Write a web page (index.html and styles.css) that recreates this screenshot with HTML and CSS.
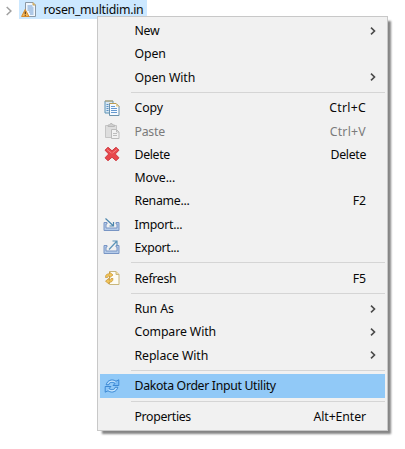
FILE: index.html
```
<!DOCTYPE html>
<html lang="en">
<head>
<meta charset="utf-8">
<title>Context menu</title>
<link rel="stylesheet" href="styles.css">
</head>
<body>
<div class="tree-row">
  <svg class="expander" viewBox="0 0 8 10"><path d="M1.7 1 5.9 5 1.7 9"/></svg>
  <div class="file">
    <svg class="file-icon" viewBox="0 0 16 17">
      <path d="M4.5 1.5h7.500l2.500 2.500v11.500h-10z" fill="#f1f7fd" stroke="#8a98a5"/>
      <path d="M12 1.500V4h2.500" fill="#e3c47c" stroke="#c6a35c"/>
      <path d="M6.500 5h5M6.500 7h6M6.500 9h6M8 11h4.500M9 13h3.500" stroke="#6d9ad0"/>
      <path d="M4.200 8.500 8 15.500H.6z" fill="#f5b95a" stroke="#d98b2b"/>
      <path d="M4.300 10.500v2.500M4.300 13.800v1" stroke="#5c3b16" stroke-width="1.200"/>
    </svg>
    <span class="tight">rosen_multidim.in</span>
  </div>
</div>

<div class="menu">
  <div class="item"><i></i><span class="tight">New</span><svg class="arrow" viewBox="0 0 6 8"><path d="M1 .7 4.500 4 1 7.300"/></svg></div>
  <div class="item"><i></i><span>Open</span></div>
  <div class="item"><i></i><span>Open With</span><svg class="arrow" viewBox="0 0 6 8"><path d="M1 .7 4.500 4 1 7.300"/></svg></div>
  <div class="sep"></div>
  <div class="item"><i><svg viewBox="0 0 16 16">
    <path d="M1 1h8v12H1z" fill="#d8e8f3" stroke="#5d93b5"/>
    <path d="M1 1h8" stroke="#c2a465"/>
    <path d="M2.500 4.500h2M2.500 6.500h2M2.500 8.500h2M2.500 10.500h2" stroke="#5c91c5"/>
    <path d="M5.500 3.500h6.500l3 3v9H5.500z" fill="#f5faff" stroke="#6c93ad"/>
    <path d="M5.500 3.500H12l3 3" fill="none" stroke="#bd9b50"/>
    <path d="M12 3.500v3h3z" fill="#e9cd89"/>
    <path d="M7 6.500h4M7 8.500h6M7 10.500h6M7 12.500h6" stroke="#6599cf"/>
  </svg></i><span>Copy</span><b class="loose">Ctrl+C</b></div>
  <div class="item disabled"><i><svg viewBox="0 0 16 16">
    <path d="M1.500 2.500h11v12h-11z" fill="#dedede" stroke="#c5c5c5"/>
    <path d="M4 3.500V2h1.500L6.500.6h1.500L9 2h1.500v1.500z" fill="#d0d0d0" stroke="#b8b8b8"/>
    <path d="M7.500 6.500h5l2.500 2.500v6.500H7.500z" fill="#f2f2f2" stroke="#bbb"/>
    <path d="M12.500 6.500V9H15M9 10.500h4M9 12.500h4" fill="none" stroke="#bdbdbd"/>
  </svg></i><span class="tight">Paste</span><b class="loose">Ctrl+V</b></div>
  <div class="item"><i><svg viewBox="0 0 16 16">
    <path d="M4 1.300 8 4.800 12 1.300 15 4.200 11.300 8 15 11.800 12 14.700 8 11.200 4 14.700 1 11.800 4.700 8 1 4.200z" fill="#e8474c" stroke="#cf3940" stroke-linejoin="round"/>
    <path d="M3 3.500 7.500 7M12.800 3.500 8.500 7" fill="none" stroke="#f48583"/>
  </svg></i><span class="tighter">Delete</span><b class="tighter">Delete</b></div>
  <div class="item"><i></i><span>Move...</span></div>
  <div class="item"><i></i><span class="tight">Rename...</span><b>F2</b></div>
  <div class="item"><i><svg class="wide" viewBox="0 0 17 16">
    <path d="M4 6.500H1v8h15v-8h-3v1.500h1v4H3V8h1z" fill="#b5cbe9" stroke="#7895c4"/>
    <path d="M2.500 2.500 10 9.500M10.500 6v4h-4" fill="none" stroke="#4d86ad" stroke-width="1.200"/>
  </svg></i><span class="tight">Import...</span></div>
  <div class="item"><i><svg class="wide" viewBox="0 0 17 16">
    <path d="M4 6.500H1v8h15v-8h-3v1.500h1v4H3V8h1z" fill="#b5cbe9" stroke="#7895c4"/>
    <path d="M6 10.500 13.500 2.500M9.500 2H14v4.500" fill="none" stroke="#5d94b8" stroke-width="1.200"/>
  </svg></i><span class="tighter">Export...</span></div>
  <div class="sep"></div>
  <div class="item"><i><svg viewBox="0 0 16 16">
    <path d="M5.500 1.500H12L15 4.500v10H5.500z" fill="#fdfcf4" stroke="#c9b77c"/>
    <path d="M12 1.500v3h3" fill="#f1dea7" stroke="#c9b77c"/>
    <path d="M1.500 7.500C1.500 4.500 3 3.800 5.500 3.800V2L9 5 5.500 7.800V6C4 6 3.500 6.500 3.500 7.500zM9 8.500c0 3-1.500 3.800-4 3.800V14L1.500 11.200 5 8.300v1.800c1.500 0 2-.6 2-1.600z" fill="#f1c65b" stroke="#c69131" stroke-width=".7"/>
  </svg></i><span class="tighter">Refresh</span><b>F5</b></div>
  <div class="sep"></div>
  <div class="item"><i></i><span>Run As</span><svg class="arrow" viewBox="0 0 6 8"><path d="M1 .7 4.500 4 1 7.300"/></svg></div>
  <div class="item"><i></i><span>Compare With</span><svg class="arrow" viewBox="0 0 6 8"><path d="M1 .7 4.500 4 1 7.300"/></svg></div>
  <div class="item"><i></i><span>Replace With</span><svg class="arrow" viewBox="0 0 6 8"><path d="M1 .7 4.500 4 1 7.300"/></svg></div>
  <div class="sep"></div>
  <div class="item selected"><i><svg viewBox="0 0 16 16">
    <path d="M2.200 6.800C2.800 3 7.500.2 12 3.200L14.800 1.800V7.500H9l2-2C8 3.300 5.200 4.500 4.800 6.800z" fill="#7dbdf6" stroke="#3482cf" stroke-width=".9"/>
    <path d="M13.800 9.200C13.200 13 8.500 15.800 4 12.800L1.200 14.200V8.500H7l-2 2c3 2.200 5.800 1 6.200-1.300z" fill="#8cc6f8" stroke="#3482cf" stroke-width=".9"/>
    <path d="M3.700 6C5 3 8.500 2.300 11.500 4.200M12.300 10c-1.300 3-4.800 3.700-7.800 1.800" fill="none" stroke="#d6edff"/>
  </svg></i><span class="tighter">Dakota Order Input Utility</span></div>
  <div class="sep"></div>
  <div class="item"><i></i><span class="tighter">Properties</span><b>Alt+Enter</b></div>
</div>
</body>
</html>
```
FILE: styles.css
```
* { box-sizing: border-box; }
body {
  margin: 0;
  width: 405px;
  height: 449px;
  overflow: hidden;
  background: #fff;
  color: #080808;
  font-family: "Noto Sans", "Open Sans", sans-serif;
  font-size: 12.3px;
  letter-spacing: -0.1px;
}
svg { display: block; fill: none; }
.tight { letter-spacing: -0.26px; }
.tighter { letter-spacing: -0.33px; }
.loose { letter-spacing: 0.25px; }
.tree-row { display: flex; align-items: center; height: 19px; padding-left: 5px; }
.expander { width: 8px; height: 10px; margin-top: 3px; stroke: #a0a0a0; stroke-width: 1.5; }
.file {
  display: flex;
  align-items: center;
  width: 128px;
  height: 19px;
  margin-left: 6px;
  padding-left: 2px;
  background: #cce8ff;
  white-space: nowrap;
}
.file-icon { width: 16px; height: 17px; margin-right: 6.5px; flex: none; }
.menu {
  position: absolute;
  left: 97px;
  top: 16px;
  width: 291px;
  height: 415px;
  padding: 2px;
  border: 1px solid #c8c8c8;
  background: #f1f1f1;
  box-shadow: 4px 4px 2px -1px #858585;
}
.item {
  display: flex;
  align-items: center;
  height: 23.25px;
  padding-right: 19px;
  line-height: 23px;
  white-space: nowrap;
}
.item i { width: 34.5px; padding-left: 4px; flex: none; }
.item i svg { width: 16px; height: 16px; }
.item i svg.wide { width: 17px; margin-left: -1px; }
.item b { margin-left: auto; font-weight: normal; }
.arrow { width: 6px; height: 8px; margin: 0 -10px 0 auto; stroke: #4a4a4a; stroke-width: 1.6; }
.disabled { color: #7b7b7b; }
.selected { background: #91c9f7; }
.sep { height: 7.45px; padding-top: 3px; margin-left: 31px; }
.sep::before { content: ""; display: block; height: 1px; background: #d5d5d5; }
```
